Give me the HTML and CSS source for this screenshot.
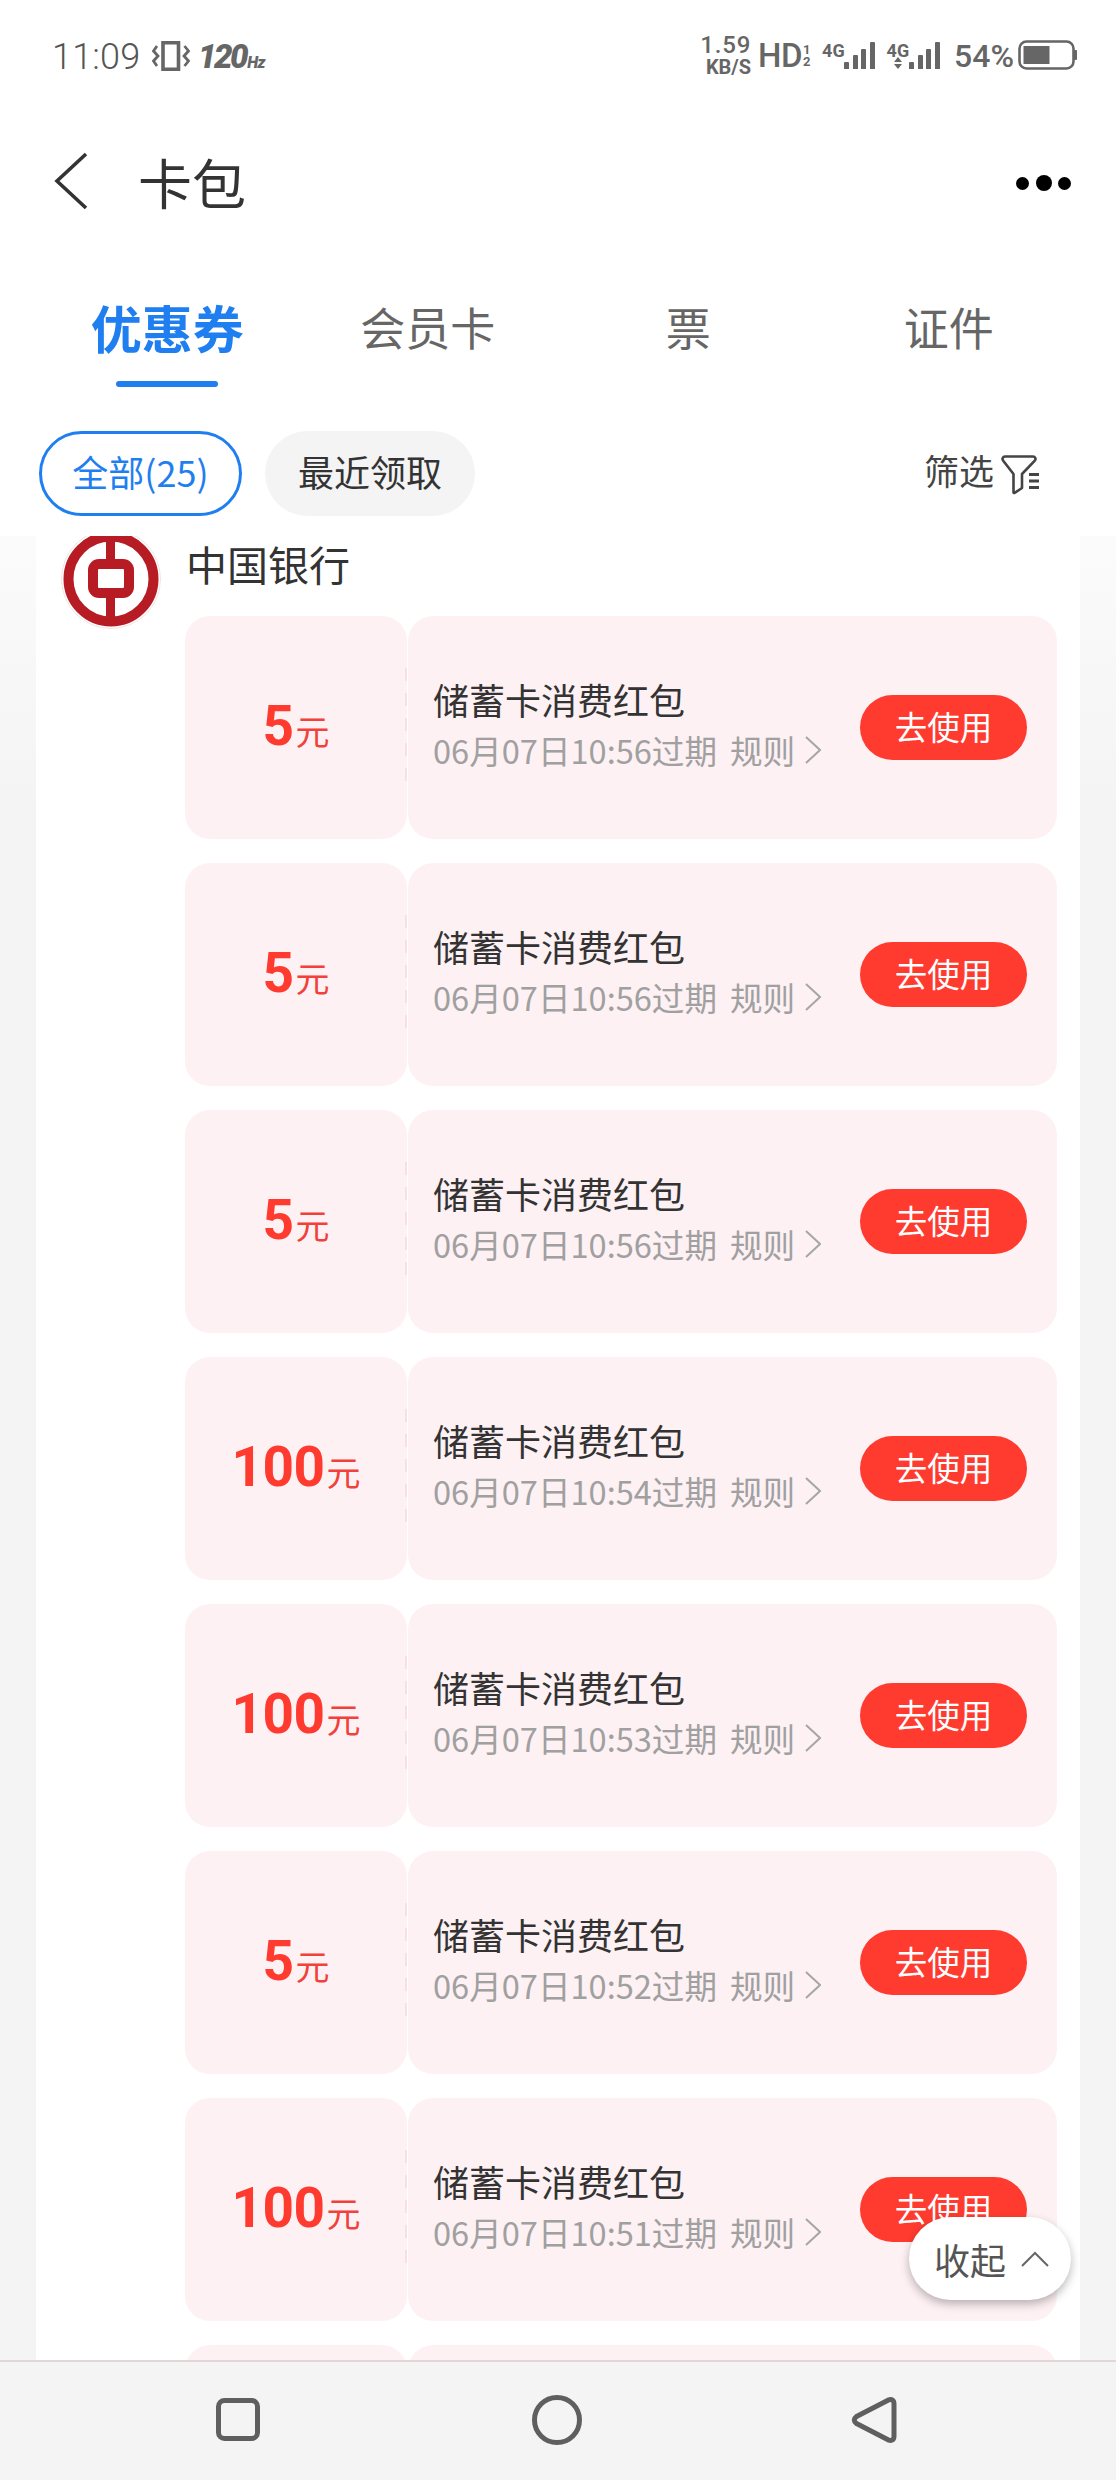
FILE: index.html
```html
<!DOCTYPE html>
<html lang="zh-CN">
<head>
<meta charset="utf-8">
<title>卡包</title>
<link rel="stylesheet" href="styles.css">
</head>
<body>
<div class="page">
  <header class="status">
    <div class="status-left">
      <span class="time">11:09</span>
      <svg class="vib" viewBox="0 0 38 30" width="38" height="30"><rect x="11" y="1.7" width="15.5" height="26.6" fill="none" stroke="#666" stroke-width="3.6"/><path d="M5 5 L1.5 10 L6 15 L1.5 20 L5 25 M32.500 5 L36.500 10 L32 15 L36.500 20 L32.500 25" fill="none" stroke="#666" stroke-width="2.8"/></svg>
      <span class="hz"><b>120</b><i>Hz</i></span>
    </div>
    <div class="status-right">
      <div class="speed"><span class="sp1">1.59</span><span class="sp2">KB/S</span></div>
      <span class="hd">HD</span>
      <div class="frac"><span>1</span><span>2</span></div>
      <div class="sig">
        <span class="g4">4G</span>
        <svg viewBox="0 0 32 27" width="32" height="27"><path d="M1 27V21a1 1 0 0 1 1-1h3a1 1 0 0 1 1 1v6zM10 27V14a1 1 0 0 1 1-1h3a1 1 0 0 1 1 1v13zM18 27V8a1 1 0 0 1 1-1h3a1 1 0 0 1 1 1v19zM27 27V1a1 1 0 0 1 1-1h3a1 1 0 0 1 1 1v26z" fill="#666"/></svg>
      </div>
      <div class="sig sig2">
        <span class="g4">4G<svg class="arrows" viewBox="0 0 10 12" width="10" height="12"><path d="M5 0 L9 5 H1 Z M5 12 L9 7 H1 Z" fill="#666"/></svg></span>
        <svg viewBox="0 0 32 27" width="32" height="27"><path d="M1 27V21a1 1 0 0 1 1-1h3a1 1 0 0 1 1 1v6zM10 27V14a1 1 0 0 1 1-1h3a1 1 0 0 1 1 1v13zM18 27V8a1 1 0 0 1 1-1h3a1 1 0 0 1 1 1v19zM27 27V1a1 1 0 0 1 1-1h3a1 1 0 0 1 1 1v26z" fill="#666"/></svg>
      </div>
      <span class="batt-text">54%</span>
      <svg class="batt" viewBox="0 0 59 30" width="59" height="30"><rect x="1.5" y="1.5" width="54" height="27" rx="7" fill="none" stroke="#666" stroke-width="2.6"/><rect x="5.5" y="6" width="26" height="18" fill="#666"/><rect x="56" y="10" width="3" height="10" rx="1" fill="#666"/></svg>
    </div>
  </header>

  <div class="titlebar">
    <svg class="back" viewBox="0 0 34 58" width="34" height="58"><path d="M32 2 L3 29 L32 56" fill="none" stroke="#333" stroke-width="3.6"/></svg>
    <h1 class="title">卡包</h1>
    <div class="more"><span></span><span class="big"></span><span></span></div>
  </div>

  <nav class="tabs">
    <div class="tab active"><span class="tab-label">优惠券</span><span class="tab-bar"></span></div>
    <div class="tab"><span class="tab-label">会员卡</span></div>
    <div class="tab"><span class="tab-label">票</span></div>
    <div class="tab"><span class="tab-label">证件</span></div>
  </nav>

  <div class="filters">
    <span class="pill pill-on">全部(25)</span>
    <span class="pill pill-off">最近领取</span>
    <div class="filter-btn">
      <span>筛选</span>
      <svg viewBox="0 0 38 40" width="38" height="40"><path d="M4 1.5 H32 a2.5 2.5 0 0 1 1.8 4.2 L21 19 V33 L13.5 38 a0.8 0.8 0 0 1 -1 -0.6 V19 L2.2 5.700 A2.5 2.5 0 0 1 4 1.5 Z" fill="none" stroke="#444" stroke-width="2.6" stroke-linejoin="round"/><path d="M28 19.500 H38 M28 26 H38 M28 32.500 H38" stroke="#444" stroke-width="3"/></svg>
    </div>
  </div>

  <main class="main">
    <section class="sheet">
      <div class="bank">
        <svg class="logo" viewBox="0 7 100 93" width="100" height="93">
          <circle cx="50" cy="50" r="49.500" fill="#fff" stroke="#f0e4e4" stroke-width="1"/>
          <circle cx="50" cy="50" r="42.500" fill="none" stroke="#b71c24" stroke-width="10"/>
          <rect x="45" y="6" width="9" height="88" fill="#b71c24"/>
          <rect x="32" y="35" width="36" height="29" rx="6" fill="#fff" stroke="#b71c24" stroke-width="10"/>
        </svg>
        <span class="bank-name">中国银行</span>
      </div>
      <div class="coupons">
        <article class="coupon">
          <div class="stub"><span class="amt">5</span><span class="unit">元</span></div>
          <div class="body">
            <div class="info"><div class="name">储蓄卡消费红包</div><div class="meta"><span>06月07日10:56过期</span><span class="rule">规则</span><svg class="chev" viewBox="0 0 16 28" width="16" height="28"><path d="M1 1 L15 14 L1 27" fill="none" stroke="#a6a6a6" stroke-width="2"/></svg></div></div>
            <span class="use">去使用</span>
          </div>
        </article>
        <article class="coupon">
          <div class="stub"><span class="amt">5</span><span class="unit">元</span></div>
          <div class="body">
            <div class="info"><div class="name">储蓄卡消费红包</div><div class="meta"><span>06月07日10:56过期</span><span class="rule">规则</span><svg class="chev" viewBox="0 0 16 28" width="16" height="28"><path d="M1 1 L15 14 L1 27" fill="none" stroke="#a6a6a6" stroke-width="2"/></svg></div></div>
            <span class="use">去使用</span>
          </div>
        </article>
        <article class="coupon">
          <div class="stub"><span class="amt">5</span><span class="unit">元</span></div>
          <div class="body">
            <div class="info"><div class="name">储蓄卡消费红包</div><div class="meta"><span>06月07日10:56过期</span><span class="rule">规则</span><svg class="chev" viewBox="0 0 16 28" width="16" height="28"><path d="M1 1 L15 14 L1 27" fill="none" stroke="#a6a6a6" stroke-width="2"/></svg></div></div>
            <span class="use">去使用</span>
          </div>
        </article>
        <article class="coupon">
          <div class="stub"><span class="amt">100</span><span class="unit">元</span></div>
          <div class="body">
            <div class="info"><div class="name">储蓄卡消费红包</div><div class="meta"><span>06月07日10:54过期</span><span class="rule">规则</span><svg class="chev" viewBox="0 0 16 28" width="16" height="28"><path d="M1 1 L15 14 L1 27" fill="none" stroke="#a6a6a6" stroke-width="2"/></svg></div></div>
            <span class="use">去使用</span>
          </div>
        </article>
        <article class="coupon">
          <div class="stub"><span class="amt">100</span><span class="unit">元</span></div>
          <div class="body">
            <div class="info"><div class="name">储蓄卡消费红包</div><div class="meta"><span>06月07日10:53过期</span><span class="rule">规则</span><svg class="chev" viewBox="0 0 16 28" width="16" height="28"><path d="M1 1 L15 14 L1 27" fill="none" stroke="#a6a6a6" stroke-width="2"/></svg></div></div>
            <span class="use">去使用</span>
          </div>
        </article>
        <article class="coupon">
          <div class="stub"><span class="amt">5</span><span class="unit">元</span></div>
          <div class="body">
            <div class="info"><div class="name">储蓄卡消费红包</div><div class="meta"><span>06月07日10:52过期</span><span class="rule">规则</span><svg class="chev" viewBox="0 0 16 28" width="16" height="28"><path d="M1 1 L15 14 L1 27" fill="none" stroke="#a6a6a6" stroke-width="2"/></svg></div></div>
            <span class="use">去使用</span>
          </div>
        </article>
        <article class="coupon">
          <div class="stub"><span class="amt">100</span><span class="unit">元</span></div>
          <div class="body">
            <div class="info"><div class="name">储蓄卡消费红包</div><div class="meta"><span>06月07日10:51过期</span><span class="rule">规则</span><svg class="chev" viewBox="0 0 16 28" width="16" height="28"><path d="M1 1 L15 14 L1 27" fill="none" stroke="#a6a6a6" stroke-width="2"/></svg></div></div>
            <span class="use">去使用</span>
          </div>
        </article>
        <article class="coupon">
          <div class="stub"></div>
          <div class="body"></div>
        </article>
      </div>
    </section>
  </main>

  <footer class="navbar">
    <svg viewBox="0 0 44 44" width="44" height="44"><rect x="2.500" y="2.500" width="39" height="38" rx="6" fill="none" stroke="#5f5f5f" stroke-width="5"/></svg>
    <svg viewBox="0 0 50 50" width="50" height="50"><circle cx="25" cy="25" r="22.500" fill="none" stroke="#5f5f5f" stroke-width="5"/></svg>
    <svg viewBox="0 0 46 46" width="46" height="46"><path d="M5.500 19.500 L37 3.200 Q43 1 43 7 V39 Q43 45 37 42.800 L5.500 26.500 Q1 23 5.500 19.500 Z" fill="none" stroke="#5f5f5f" stroke-width="5" stroke-linejoin="round"/></svg>
  </footer>

  <div class="collapse"><span>收起</span><svg viewBox="0 0 28 16" width="28" height="16"><path d="M1 15 L14 2 L27 15" fill="none" stroke="#666" stroke-width="2"/></svg></div>
</div>
</body>
</html>
```
FILE: styles.css
```css
* { box-sizing: border-box; }
html, body { margin: 0; padding: 0; }
body { font-family: "Noto Sans CJK SC", "Noto Sans", sans-serif; background: #fff; color: #333; }
.page { position: relative; width: 1116px; height: 2480px; overflow: hidden; display: flex; flex-direction: column; background: #fff; }

/* status bar */
.status { height: 90px; flex: none; display: flex; justify-content: space-between; padding: 37px 39px 0 52px; font-family: Roboto, sans-serif; color: #666; }
.status-left { display: flex; align-items: flex-start; }
.time { font-size: 36px; line-height: 40px; font-weight: 300; color: #555; letter-spacing: 0.2px; width: 100px; }
.vib { margin-top: 4px; }
.hz { display: flex; align-items: baseline; margin-left: 8px; font-style: italic; font-weight: 900; line-height: 40px; }
.hz b { font-size: 33px; font-weight: 900; letter-spacing: -2.5px; }
.hz i { font-size: 16px; font-weight: 900; margin-left: 1px; letter-spacing: -0.5px; }
.status-right { display: flex; align-items: flex-start; height: 40px; }
.speed { display: flex; flex-direction: column; align-items: flex-end; width: 48px; margin-top: -3px; }
.sp1 { font-size: 24px; line-height: 23px; font-weight: 500; letter-spacing: 0.8px; }
.sp2 { font-size: 20px; line-height: 21px; font-weight: 700; }
.hd { font-size: 33px; line-height: 38px; font-weight: 500; margin-left: 7px; letter-spacing: -0.5px; }
.frac { display: flex; flex-direction: column; font-size: 13px; line-height: 12px; font-weight: 700; margin-left: 1px; margin-top: 7px; width: 10px; }
.sig { display: flex; align-items: flex-end; margin-left: 9px; height: 32px; }
.sig2 { margin-left: 11.5px; }
.g4 { position: relative; display: block; width: 23px; font-size: 18px; line-height: 18px; font-weight: 700; align-self: flex-start; margin-top: 5px; margin-right: -2px; }
.arrows { position: absolute; left: 6px; top: 15px; }
.batt-text { font-size: 32px; line-height: 38px; font-weight: 500; margin-left: 14.5px; }
.batt { margin-left: 4px; margin-top: 3px; }

/* title bar */
.titlebar { height: 186px; flex: none; display: flex; align-items: center; padding: 0 45px 0 54px; }
.back { flex: none; margin-top: -5px; }
.title { margin: -2px 0 0 50px; font-size: 54px; line-height: 60px; font-weight: 400; color: #333; }
.more { margin-left: auto; display: flex; align-items: center; gap: 6.5px; }
.more span { width: 13px; height: 13px; border-radius: 50%; background: #000; }
.more .big { width: 16px; height: 16px; }

/* tabs */
.tabs { height: 145px; flex: none; display: grid; grid-template-columns: repeat(4, 1fr); padding: 0 37px; }
.tab { display: flex; flex-direction: column; align-items: center; padding-top: 21px; }
.tab-label { font-size: 45px; line-height: 60px; color: #666; }
.active .tab-label { font-size: 51px; font-weight: 700; color: #1f7ff0; }
.tab-bar { width: 102px; height: 6px; margin-top: 24px; border-radius: 3px; background: #1f7ff0; }

/* filters */
.filters { height: 115px; flex: none; display: flex; align-items: flex-start; gap: 23px; padding: 10px 77px 0 39px; }
.pill { height: 85px; border-radius: 43px; display: flex; align-items: center; justify-content: center; font-size: 36px; padding-bottom: 5px; }
.pill-on { width: 203px; border: 3px solid #1f7ff0; color: #1f7ff0; }
.pill-off { width: 210px; background: #f4f4f4; color: #333; }
.filter-btn { margin-left: auto; height: 85px; display: flex; align-items: center; gap: 7px; font-size: 35px; color: #444; }
.filter-btn svg { margin-top: 2px; flex: none; }
.filter-btn span { margin-top: -8px; }

/* main */
.main { flex: 1; min-height: 0; padding: 0 36px; background: linear-gradient(#fbfbfb, #f4f4f4 270px); }
.sheet { height: 100%; display: flex; flex-direction: column; background: #fff; padding: 0 23px 0 25px; }
.bank { height: 80px; flex: none; display: flex; align-items: flex-start; }
.logo { flex: none; }
.bank-name { margin-left: 25px; font-size: 41px; line-height: 54px; color: #333; }
.coupons { flex: 1; min-height: 0; overflow: hidden; display: flex; flex-direction: column; gap: 24px; padding-left: 124px; }
.coupon { display: flex; gap: 1px; height: 223px; flex: none; }
.stub { width: 222px; flex: none; display: flex; align-items: baseline; justify-content: center; padding-top: 72px; border-radius: 25px; background-color: #fef1f4; background-image: repeating-linear-gradient(#f9dfe4 0 13px, transparent 13px 25px); background-size: 2px 120px; background-position: right center; background-repeat: no-repeat; }
.amt { font-family: Roboto, sans-serif; font-size: 55px; line-height: 76px; font-weight: 700; letter-spacing: -0.5px; color: #ff3b30; }
.unit { font-size: 34px; line-height: 40px; color: #f0413a; margin-left: 2px; }
.body { flex: 1; display: flex; align-items: flex-start; border-radius: 25px; background: #fef1f4; padding: 0 30px 0 25px; }
.info { padding-top: 59px; }
.name { font-size: 36px; line-height: 48px; color: #333; }
.meta { display: flex; align-items: center; height: 44px; margin-top: 5px; font-size: 32.6px; line-height: 44px; color: #a0a0a0; }
.rule { margin-left: 13px; font-size: 32.6px; }
.chev { margin-left: 10px; flex: none; }
.use { margin-left: auto; margin-top: 79px; width: 167px; height: 65px; border-radius: 33px; display: flex; align-items: center; justify-content: center; background: #ff3b30; color: #fff; font-size: 32.5px; padding-bottom: 5px; }

/* navbar */
.navbar { height: 120px; flex: none; display: grid; grid-template-columns: 321px 317px 318px; padding-left: 77px; padding-bottom: 2px; align-items: center; justify-items: center; background: #f4f4f4; border-top: 2px solid #e2d6d6; }

/* floating */
.collapse { position: absolute; left: 909px; top: 2217px; width: 162px; height: 83px; border-radius: 42px; background: #fff; box-shadow: 0 4px 10px rgba(0,0,0,.28); display: flex; align-items: center; padding-left: 25px; gap: 15px; font-size: 36px; color: #555; }
.collapse svg { flex: none; }
```
